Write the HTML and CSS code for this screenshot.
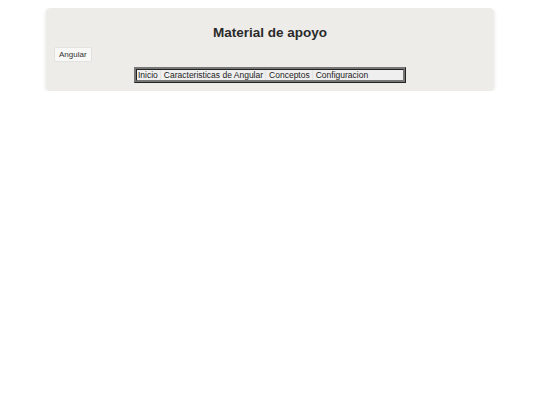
FILE: index.html
```html
<!DOCTYPE html>
<html lang="es">
<head>
<meta charset="utf-8">
<title>Material de apoyo</title>
<link rel="stylesheet" href="styles.css">
</head>
<body>
<div class="card">
  <h1 class="title">Material de apoyo</h1>
  <div class="tag-row"><span class="tag">Angular</span></div>
  <nav class="menu">
    <a class="item">Inicio</a>
    <a class="item">Caracteristicas de Angular</a>
    <a class="item">Conceptos</a>
    <a class="item">Configuracion</a>
  </nav>
</div>
</body>
</html>
```
FILE: styles.css
```css
body {
  margin: 8px;
  background: #ffffff;
  font-family: "Liberation Sans", Arial, sans-serif;
  color: #222;
}
.card {
  width: 448px;
  margin: 0 auto;
  box-sizing: border-box;
  background: #edece9;
  border-radius: 5px;
  box-shadow: 0 1px 4px rgba(0,0,0,0.12);
  padding: 16px 8px 8px;
  height: 83px;
}
.title {
  margin: 0;
  text-align: center;
  font-size: 13.5px;
  font-weight: bold;
  line-height: 18px;
  color: #2a2a2a;
}
.tag-row {
  margin-top: 5px;
  display: flex;
}
.tag {
  background: #f8f8f6;
  border: 1px solid #e2e2de;
  border-radius: 2px;
  font-size: 8px;
  line-height: 13px;
  padding: 0 4px;
  color: #333;
}
.menu {
  width: 272px;
  box-sizing: border-box;
  margin: 5px auto 0;
  border: 3px ridge #777;
  background: #efefef;
  display: flex;
  height: 16px;
  align-items: center;
}
.item {
  font-size: 8.5px;
  color: #222;
  padding: 0 2px 0 1px;
  margin-right: 2px;
  border-right: 1px solid #e2e2e2;
  line-height: 10px;
}
.item:last-child {
  border-right: none;
}
```
